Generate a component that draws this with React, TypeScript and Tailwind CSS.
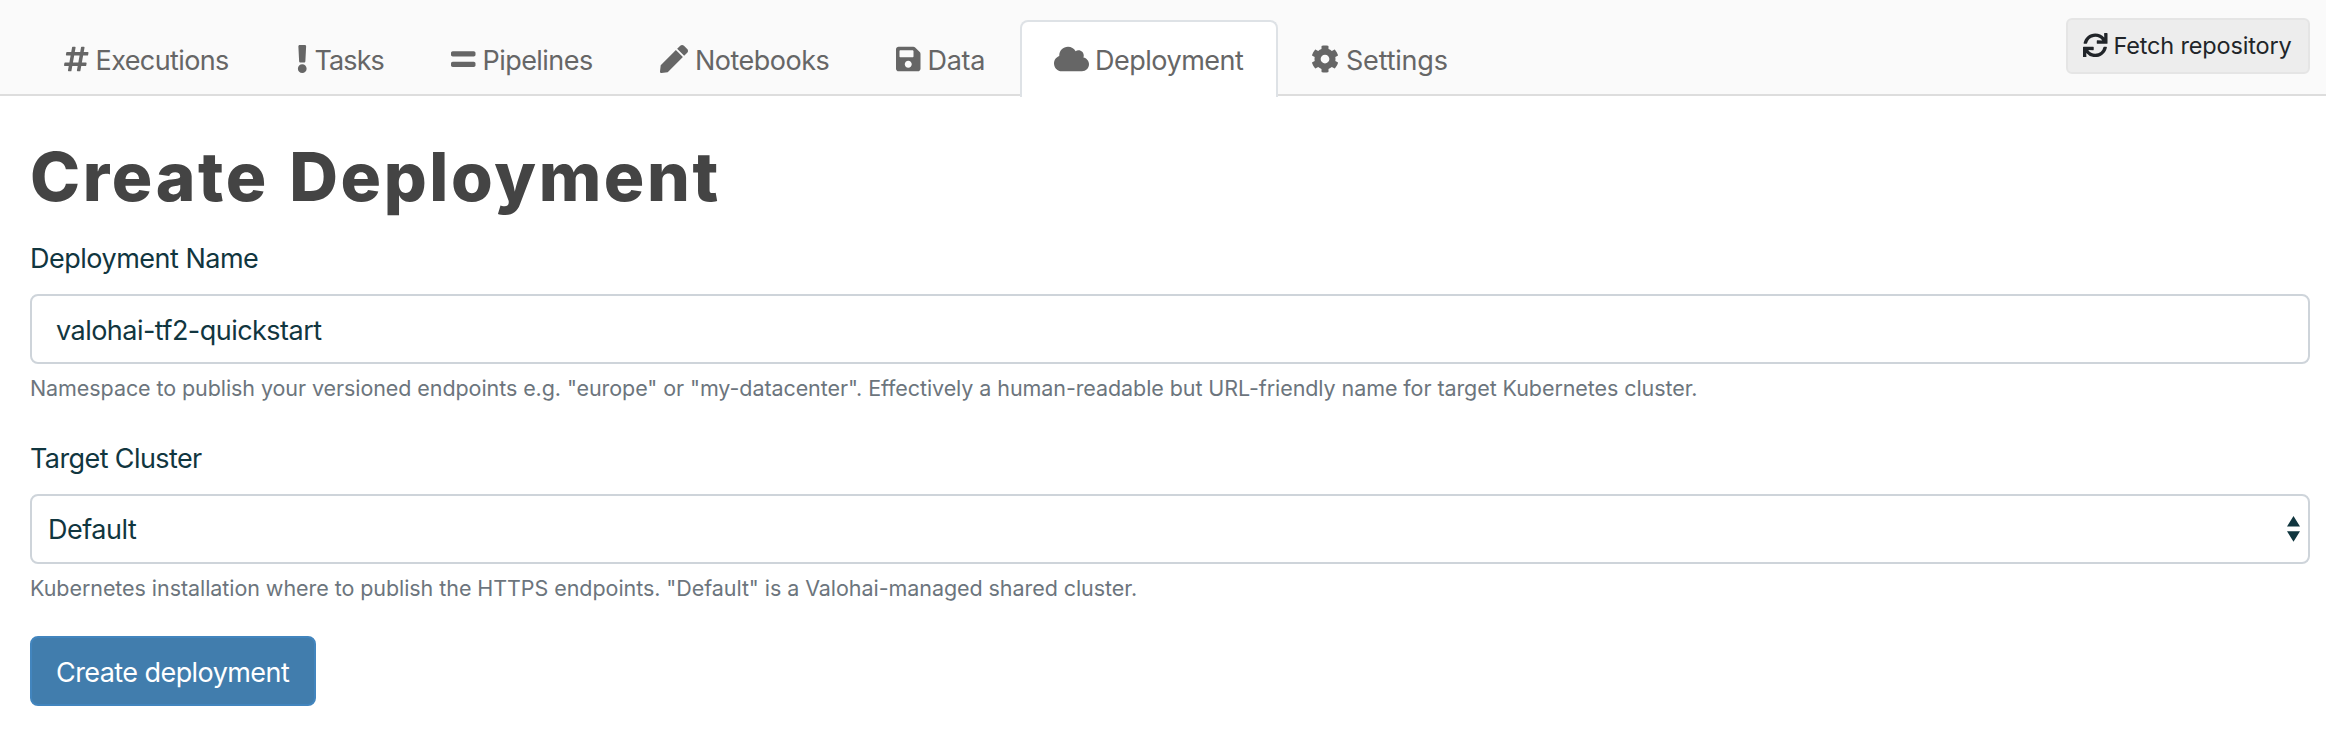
import { useState } from 'react';
import type { IconType } from 'react-icons';
import { FaCloud, FaCog, FaEquals, FaExclamation, FaHashtag, FaPen, FaSave, FaSync } from 'react-icons/fa';

type Tab = {
  name: string;
  icon: IconType;
  tabClass: string;
  iconClass: string;
  textClass: string;
};

const tabs: Tab[] = [
  { name: 'Executions', icon: FaHashtag, tabClass: 'w-[233px]', iconClass: 'w-[24.5px]', textClass: 'ml-[7px] tracking-[-0.6px]' },
  { name: 'Tasks', icon: FaExclamation, tabClass: 'w-[154px]', iconClass: 'w-[10.5px]', textClass: 'ml-[7px] tracking-[-0.9px]' },
  { name: 'Pipelines', icon: FaEquals, tabClass: 'w-[209px]', iconClass: 'w-[24.5px]', textClass: 'ml-[7px] tracking-[-0.55px]' },
  { name: 'Notebooks', icon: FaPen, tabClass: 'w-[236px]', iconClass: 'w-7', textClass: 'ml-[7px] tracking-[-0.5px]' },
  { name: 'Data', icon: FaSave, tabClass: 'w-[158px]', iconClass: 'w-[24.5px]', textClass: 'ml-[7px] tracking-[-0.3px]' },
  { name: 'Deployment', icon: FaCloud, tabClass: 'w-[258px]', iconClass: 'w-[35px]', textClass: 'ml-[6px] tracking-[-0.5px]' },
  { name: 'Settings', icon: FaCog, tabClass: 'w-[204px]', iconClass: '-ml-px w-7', textClass: 'ml-[7px] tracking-[-0.2px]' },
];

function SortArrows() {
  return (
    <svg className="-mt-[3px] h-[26px] w-[13px] shrink-0 fill-[#11363f]" viewBox="0 0 13 26">
      <path d="M0 10.6 6.5 0 13 10.6zM0 15.2h13L6.5 25.8z" />
    </svg>
  );
}

export default function App() {
  const [name, setName] = useState('valohai-tf2-quickstart');

  return (
    <div className="min-h-[740px] bg-white font-['Inter',sans-serif] text-[27px] leading-[42px] text-[#11363f]">
      <header className="flex h-24 items-start justify-between border-b-2 border-[#ddd] bg-[#fafafa] pr-4 pl-[30px]">
        <nav className="flex pt-5">
          {tabs.map(({ name: label, icon: Icon, tabClass, iconClass, textClass }) => (
            <a
              key={label}
              className={`flex h-[77px] shrink-0 items-start rounded-t-lg border-2 border-b-0 pt-[17px] pl-8 text-[#666] ${tabClass} ${
                label === 'Deployment' ? 'border-[#dee2e6] bg-white' : 'border-transparent'
              }`}
            >
              <Icon className={`mt-[6px] h-7 shrink-0 ${iconClass}`} />
              <span className={`mt-px whitespace-nowrap ${textClass}`}>{label}</span>
            </a>
          ))}
        </nav>
        <button className="mt-[18px] flex h-14 w-[244px] items-center gap-[6px] rounded-[6px] border-2 border-[#e5e5e5] bg-[#ededed] pl-[15px] text-[23.5px] leading-9 tracking-[-0.17px] whitespace-nowrap text-[#212529]">
          <FaSync className="size-[24.5px] shrink-0 -translate-y-px" />
          Fetch repository
        </button>
      </header>

      <main className="pr-4 pl-[30px]">
        <h1 className="mt-[41px] text-[67.5px] leading-[80px] font-extrabold tracking-[2.6px] text-[#444] [word-spacing:3px]">
          Create Deployment
        </h1>

        <label className="mt-[21px] block tracking-[-0.5px]">Deployment Name</label>
        <input
          value={name}
          onChange={(e) => setName(e.target.value)}
          className="mt-[14px] block h-[70px] w-full rounded-lg border-2 border-[#ced4da] bg-white px-6 pt-[2px] tracking-[-0.53px] outline-none"
        />
        <p className="mt-[7px] text-[21.5px] leading-[34px] tracking-[-0.08px] text-[#6c757d]">
          Namespace to publish your versioned endpoints e.g. "europe" or "my-datacenter". Effectively a human-readable but
          URL-friendly name for target Kubernetes cluster.
        </p>

        <label className="mt-[33px] block tracking-[-0.6px]">Target Cluster</label>
        <div className="mt-[14px] flex h-[70px] items-center justify-between rounded-lg border-2 border-[#ced4da] pt-[2px] pr-2 pl-4 tracking-[-0.48px]">
          Default
          <SortArrows />
        </div>
        <p className="mt-[7px] text-[21.5px] leading-[34px] tracking-[-0.064px] text-[#6c757d]">
          Kubernetes installation where to publish the HTTPS endpoints. "Default" is a Valohai-managed shared cluster.
        </p>

        <button className="mt-[31px] block h-[70px] w-[286px] rounded-lg border-2 border-[#4285be] bg-[#417dad] pt-[3px] pl-6 text-left tracking-[-0.57px] whitespace-nowrap text-white">
          Create deployment
        </button>
      </main>
    </div>
  );
}
